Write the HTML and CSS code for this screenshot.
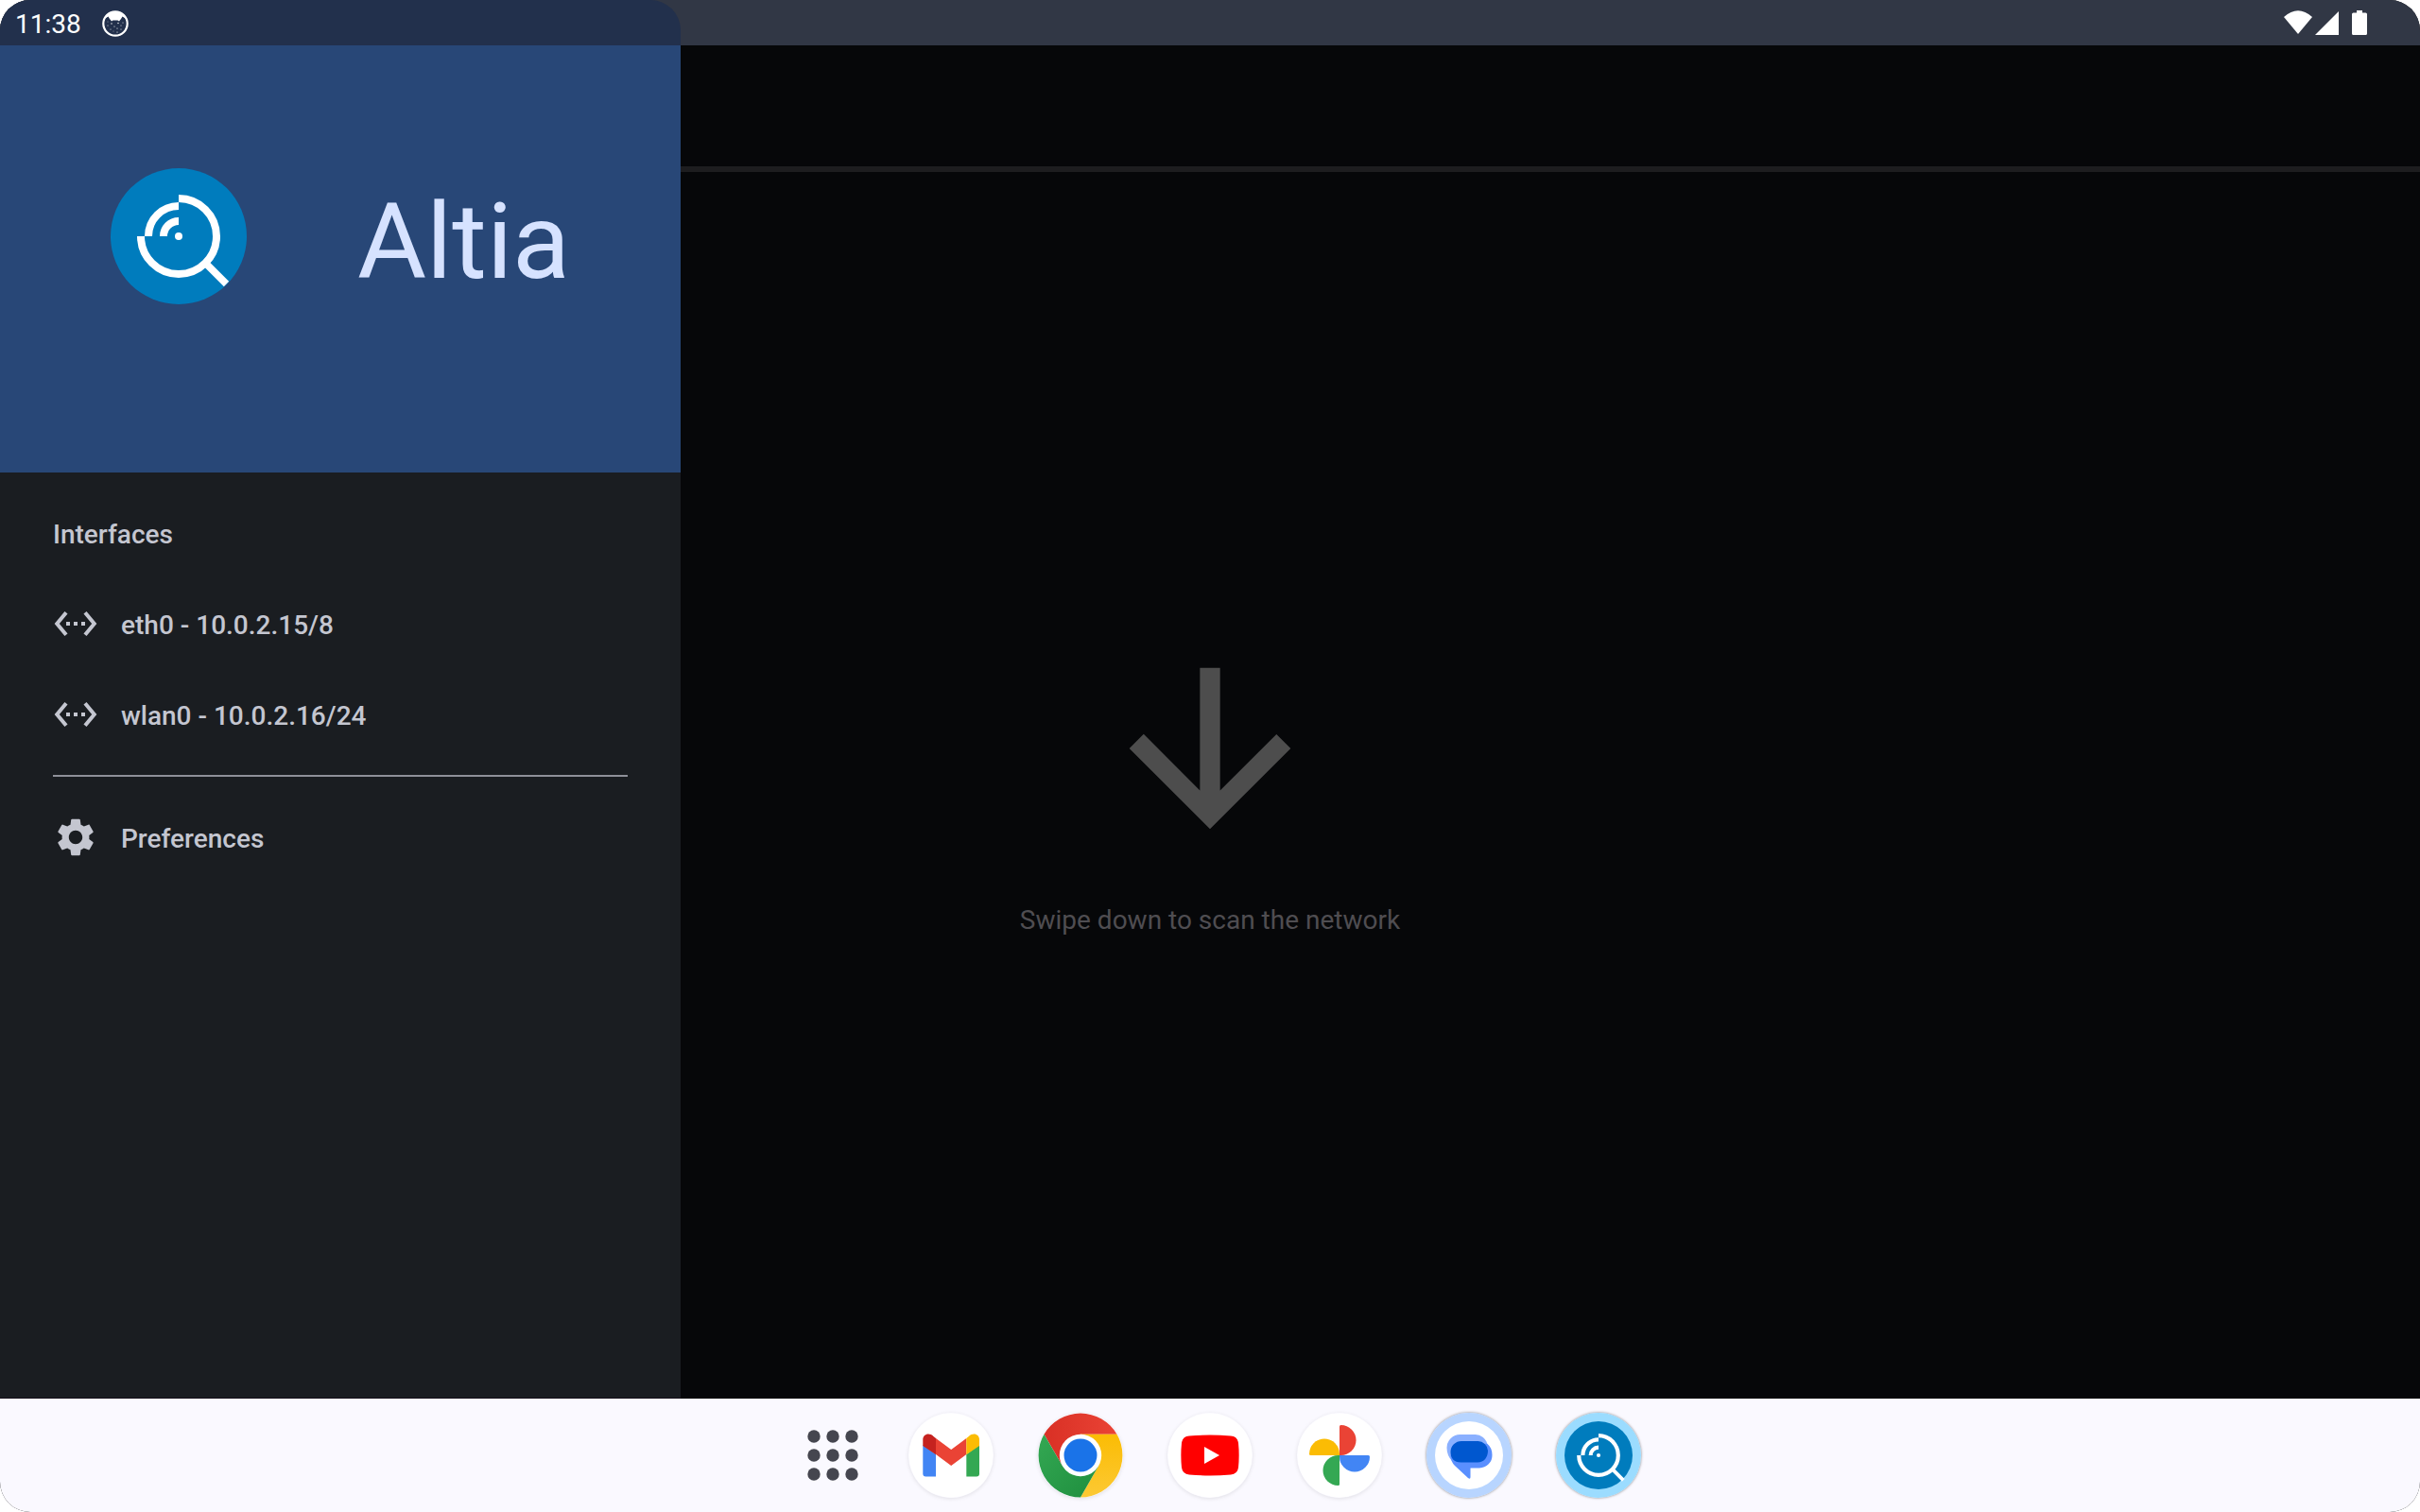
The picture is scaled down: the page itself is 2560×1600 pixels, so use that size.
FILE: index.html
```html
<!DOCTYPE html>
<html lang="en">
<head>
<meta charset="utf-8">
<title>Altia</title>
<link rel="stylesheet" href="styles.css">
</head>
<body>
<div class="screen">
  <header class="status">
    <div class="status-left">
      <time>11:38</time>
      <svg class="cat" viewBox="0 0 28 28" aria-hidden="true">
        <circle cx="14" cy="14" r="12.7" fill="none" stroke="#fff" stroke-width="2.2"/>
        <path d="M2.500 9A12.500 12.500 0 0 1 25.500 9L21.500 6.500 20 9 18 11.500 16.500 10.500H11.500L10 11.500 8 9 6.500 6.500Z" fill="#fff"/>
        <g fill="#fff"><circle cx="10" cy="14" r=".7"/><circle cx="17" cy="13.500" r=".7"/><circle cx="6" cy="16" r=".5"/><circle cx="13" cy="17" r=".6"/><circle cx="20" cy="16" r=".5"/><circle cx="16" cy="19" r=".6"/><circle cx="9" cy="20" r=".5"/><circle cx="16" cy="23" r=".6"/><circle cx="20" cy="20" r=".5"/><circle cx="12" cy="22" r=".4"/><circle cx="22" cy="13" r=".5"/><circle cx="6" cy="12" r=".4"/></g>
      </svg>
    </div>
    <div class="status-right">
      <svg class="radio" viewBox="0 0 58 26" aria-hidden="true">
        <path d="M0 7Q15-6.500 30 7L15 25Z" fill="#fff"/><path d="M58 1V26H33Z" fill="#fff"/>
      </svg>
      <svg class="battery" viewBox="0 0 16 26" aria-hidden="true">
        <path d="M5 0h6v2.500h3.500Q16 2.500 16 4v20.500Q16 26 14.500 26h-13Q0 26 0 24.500V4Q0 2.500 1.500 2.500H5Z" fill="#fff"/>
      </svg>
    </div>
  </header>

  <div class="stage">
    <main class="scan">
      <div class="toolbar"></div>
      <div class="hint">
        <svg viewBox="0 0 24 24" aria-hidden="true"><path d="M20 12l-1.410-1.410L13 16.170V4h-2v12.170l-5.580-5.590L4 12l8 8 8-8z" fill="#4d4d4d"/></svg>
        <p>Swipe down to scan the network</p>
      </div>
    </main>

    <aside class="drawer">
      <div class="brand">
        <svg class="logo" viewBox="0 0 144 144" aria-hidden="true">
          <circle cx="72" cy="72" r="72" fill="#007cbd"/>
          <g id="glyph" fill="none" stroke="#fff" stroke-width="8">
            <path d="M72 32A40 40 0 1 1 32 72"/><path d="M40 72A32 32 0 0 1 72 40"/><path d="M56 72A16 16 0 0 1 72 56"/>
            <path d="M101 101L122.500 122.500" stroke-width="7.500"/><circle cx="72" cy="72" r="4" fill="#fff" stroke="none"/>
          </g>
        </svg>
        <h1>Altia</h1>
      </div>
      <nav class="menu">
        <h2>Interfaces</h2>
        <a class="item" href="#eth0"><svg viewBox="0 0 24 24" aria-hidden="true"><use href="#ethernet"/></svg><span>eth0 - 10.0.2.15/8</span></a>
        <a class="item" href="#wlan0"><svg viewBox="0 0 24 24" aria-hidden="true"><path id="ethernet" d="M7.770 6.760L6.230 5.480.820 12l5.410 6.520 1.540-1.280L3.420 12l4.350-5.240zM7 13h2v-2H7v2zm10-2h-2v2h2v-2zm-6 2h2v-2h-2v2zm6.770-7.520l-1.540 1.280L20.580 12l-4.350 5.240 1.540 1.280L23.180 12l-5.410-6.520z"/></svg><span>wlan0 - 10.0.2.16/24</span></a>
        <hr>
        <a class="item" href="#preferences"><svg viewBox="0 0 24 24" aria-hidden="true"><path d="M19.140 12.940c.040-.300.060-.610.060-.940 0-.320-.020-.640-.070-.940l2.030-1.580c.180-.140.230-.410.120-.610l-1.920-3.320c-.120-.220-.370-.290-.590-.220l-2.390.960c-.500-.380-1.030-.700-1.620-.940l-.360-2.540c-.040-.240-.240-.410-.480-.410h-3.840c-.240 0-.430.170-.470.410l-.360 2.540c-.590.240-1.130.570-1.620.940l-2.390-.960c-.220-.080-.470 0-.590.220L2.740 8.870c-.120.210-.080.470.120.610l2.030 1.580c-.050.300-.090.630-.090.940s.020.640.070.940l-2.030 1.580c-.180.140-.230.410-.120.610l1.920 3.320c.120.220.370.290.590.220l2.390-.960c.500.380 1.030.700 1.620.940l.360 2.540c.050.240.240.410.480.410h3.840c.240 0 .440-.170.470-.410l.360-2.540c.590-.240 1.130-.560 1.620-.940l2.390.960c.220.080.470 0 .590-.220l1.920-3.320c.120-.220.070-.470-.120-.610l-2.010-1.580zM12 15.600c-1.980 0-3.600-1.620-3.600-3.600s1.620-3.600 3.600-3.600 3.600 1.620 3.600 3.600-1.620 3.600-3.600 3.600z"/></svg><span>Preferences</span></a>
      </nav>
    </aside>
  </div>

  <footer class="taskbar">
    <button class="apps" aria-label="All apps">
      <svg viewBox="-33 -33 66 66"><g fill="#45464f"><circle cx="-20" cy="-20" r="6.700"/><circle cy="-20" r="6.700"/><circle cx="20" cy="-20" r="6.700"/><circle cx="-20" r="6.700"/><circle r="6.700"/><circle cx="20" r="6.700"/><circle cx="-20" cy="20" r="6.700"/><circle cy="20" r="6.700"/><circle cx="20" cy="20" r="6.700"/></g></svg>
    </button>
    <button class="app raised" aria-label="Gmail">
      <svg viewBox="-45 -45 90 90"><circle r="44.500" fill="#fff"/>
        <path d="M-29.700-11V19.500Q-29.700 22.500-26.700 22.500H-16V-1Z" fill="#4285f4"/><path d="M30-11V19.500Q30 22.500 27 22.500H16.300V-1Z" fill="#34a853"/>
        <path d="M-16-18V-1L.2 11 16.300-1V-18L.2-6Z" fill="#ea4335"/>
        <path d="M-29.700-10V-16.500C-29.700-22.500-23-24.500-18.500-20L-16-18V-.8Z" fill="#c5221f"/><path d="M30-10V-16.500C30-22.500 23.500-24.500 18.800-20L16.300-18V-.8Z" fill="#fbbc04"/></svg>
    </button>
    <button class="app raised" aria-label="Chrome">
      <svg viewBox="-45 -45 90 90">
        <defs>
          <linearGradient id="cr" x1="0" x2="1"><stop stop-color="#d93025"/><stop offset="1" stop-color="#ea4335"/></linearGradient>
          <linearGradient id="cy" x1="0" x2="0" y1="1" y2="0"><stop stop-color="#fcc934"/><stop offset="1" stop-color="#fbbc04"/></linearGradient>
          <linearGradient id="cg" x1="1" x2="0" y1="1" y2="0"><stop stop-color="#1e8e3e"/><stop offset="1" stop-color="#34a853"/></linearGradient>
        </defs>
        <path d="M-38.500-22.200A44.500 44.500 0 0 1 38.500-22.200H0L-19.200 11.100Z" fill="url(#cr)"/>
        <path d="M38.500-22.200A44.500 44.500 0 0 1 0 44.500L19.200 11.100 0-22.200Z" fill="url(#cy)"/>
        <path d="M0 44.500A44.500 44.500 0 0 1-38.500-22.200L-19.200 11.100 0 22.200 19.200 11.100Z" fill="url(#cg)"/>
        <circle r="22.200" fill="#fff"/><circle r="17.500" fill="#1a73e8"/></svg>
    </button>
    <button class="app raised" aria-label="YouTube">
      <svg viewBox="-45 -45 90 90"><circle r="44.500" fill="#fff"/><path d="M-22-20.500Q0-22.500 22-20.500 29-20 30-13 31.300 0 30 13 29 20 22 20.500 0 22.500-22 20.500-29 20-30 13-31.300 0-30-13-29-20-22-20.500Z" fill="red"/><path d="M-6-9V9L10 0Z" fill="#fff"/></svg>
    </button>
    <button class="app raised" aria-label="Photos">
      <svg viewBox="-45 -45 90 90"><circle r="44.500" fill="#fff"/>
        <path d="M0 0V-30.500Q0-32 1.500-32A16 16 0 0 1 1.500 0Z" fill="#ea4335"/><path d="M0 0H30.500Q32 0 32 1.500A16 16 0 0 1 0 1.500Z" fill="#4285f4"/><path d="M0 0V30.500Q0 32-1.500 32A16 16 0 0 1-1.500 0Z" fill="#34a853"/><path d="M0 0H-30.500Q-32 0-32-1.500A16 16 0 0 1 0-1.500Z" fill="#fbbc04"/></svg>
    </button>
    <button class="app ringed" aria-label="Messages">
      <svg viewBox="-45 -45 90 90"><circle r="45" fill="#b8d5ff"/><circle r="36" fill="#fff"/>
        <path d="M-9-22H6A13 13 0 0 1 19.500-11L-18 6Q-23.500 0-23.500-8A14 14 0 0 1-9-22Z" fill="#8ab0ff"/>
        <path d="M19-12.500Q24.500-8 24.500-.500A13.500 13.500 0 0 1 11 13.500H1.500V23Q1.500 26-1 24L-15 11Q-19.500 6.500-19.500 0L-8-8Z" fill="#5a8fff"/>
        <path d="M-8-15H9.500A10.800 10.800 0 0 1 20-5C20 2 16 7.500 9 7.500H-8.500C-16 7.500-19.500 3-19.500-3.500A11.500 11.500 0 0 1-8-15Z" fill="#0057cf"/></svg>
    </button>
    <button class="app ringed" aria-label="Altia">
      <svg viewBox="-45 -45 90 90"><circle r="45" fill="#9bdcff"/><circle r="36" fill="#007cbd"/><use href="#glyph" transform="scale(.52) translate(-72 -72)"/></svg>
    </button>
  </footer>
</div>
</body>
</html>
```
FILE: styles.css
```css
* { box-sizing: border-box; }
body {
  margin: 0;
  background: #fff;
  font-family: Roboto, sans-serif;
  font-size: 28px;
}
h1, h2, p { margin: 0; font-weight: 400; }
svg { display: block; }
button { border: 0; padding: 0; background: none; cursor: pointer; }

.screen {
  --drawer: 720px;
  display: flex;
  flex-direction: column;
  min-height: 100vh;
  border-radius: 32px;
  overflow: hidden;
  background: #060709;
}

.status {
  display: flex;
  height: 48px;
  color: #fff;
  background: #313745;
}
.status-left {
  display: flex;
  align-items: center;
  gap: 22px;
  width: var(--drawer);
  padding-left: 16px;
  padding-top: 2px;
  background: #22304c;
  border-top-right-radius: 32px;
}
.cat { width: 28px; height: 28px; }
.status-right {
  display: flex;
  flex: 1;
  align-items: center;
  justify-content: flex-end;
  gap: 14px;
  padding-right: 56px;
}
.radio { width: 58px; height: 26px; }
.battery { width: 16px; height: 26px; }

/* The drawer shares the first grid row with the page it covers. */
.stage {
  display: grid;
  flex: 1;
  grid-template-columns: var(--drawer) 1fr;
}
.scan {
  display: flex;
  flex-direction: column;
  grid-area: 1 / 1 / 2 / 3;
}
.toolbar { height: 134px; border-bottom: 6px solid #1d1d1f; }
.hint {
  display: flex;
  flex: 1;
  flex-direction: column;
  align-items: center;
  justify-content: center;
  gap: 36px;
  padding-bottom: 6px;
  color: #4f4d51;
}
.hint svg { width: 256px; height: 256px; }
.hint p { line-height: 36px; }

.drawer {
  grid-area: 1 / 1 / 2 / 2;
  background: #1a1d21;
  border-bottom: 1px solid #16101a;
}
.brand {
  display: flex;
  align-items: center;
  justify-content: space-evenly;
  height: 452px;
  padding-bottom: 48px;
  color: #d6e2ff;
  background: #284777;
}
.logo { width: 144px; height: 144px; }
.brand h1 { padding-top: 12px; font-size: 112px; line-height: 128px; }

.menu {
  padding: 16px 56px;
  color: #c4c6d0;
  font-weight: 500;
}
.menu h2 {
  height: 96px;
  padding-top: 2px;
  font-size: 28px;
  font-weight: 500;
  line-height: 96px;
}
.item {
  display: flex;
  align-items: center;
  gap: 24px;
  height: 96px;
  color: inherit;
  text-decoration: none;
}
.item svg { width: 48px; height: 48px; fill: currentColor; }
.item span { padding-top: 2px; }
.menu hr {
  height: 2px;
  margin: 16px 0;
  border: 0;
  background: #8e9099;
}

.taskbar {
  display: flex;
  align-items: center;
  justify-content: center;
  gap: 47px;
  height: 120px;
  padding-left: 24px;
  background: #faf9ff;
}
.apps svg { width: 66px; height: 66px; }
.app { border-radius: 50%; }
.app svg { width: 90px; height: 90px; }
.raised { box-shadow: 0 1px 4px #0000001a; }
.ringed { box-shadow: 0 0 3px #00000080; }
```
